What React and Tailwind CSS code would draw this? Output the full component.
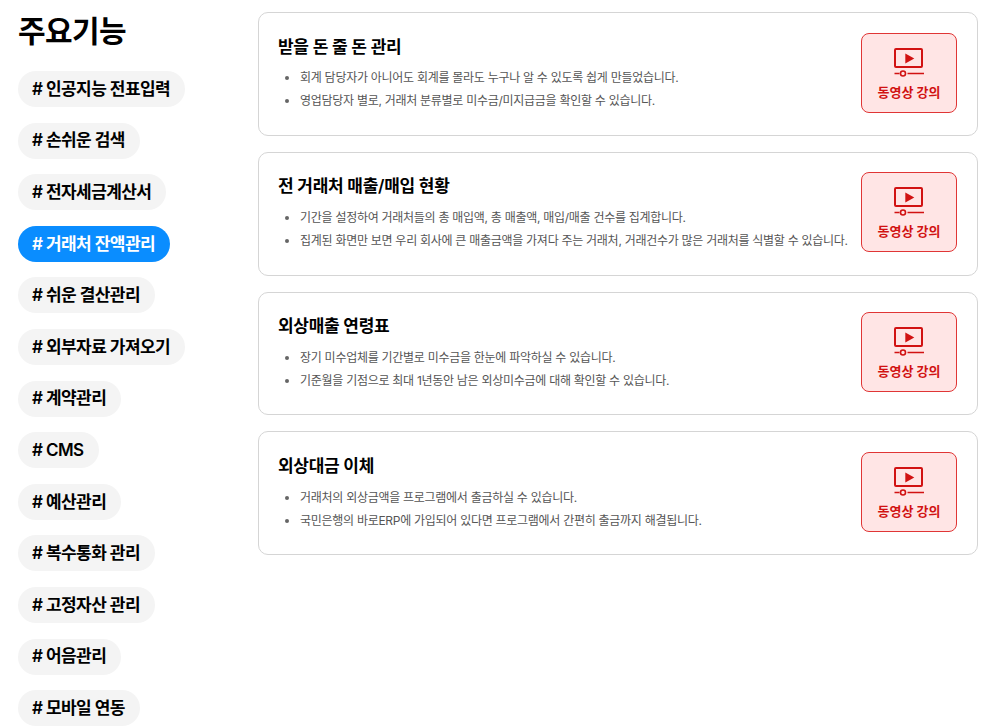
import React from 'react';

const tags = ['인공지능 전표입력', '손쉬운 검색', '전자세금계산서', '거래처 잔액관리', '쉬운 결산관리', '외부자료 가져오기', '계약관리', 'CMS', '예산관리', '복수통화 관리', '고정자산 관리', '어음관리', '모바일 연동'];

const cards = [
  {
    title: '받을 돈 줄 돈 관리',
    lines: ['회계 담당자가 아니어도 회계를 몰라도 누구나 알 수 있도록 쉽게 만들었습니다.', '영업담당자 별로, 거래처 분류별로 미수금/미지급금을 확인할 수 있습니다.'],
  },
  {
    title: '전 거래처 매출/매입 현황',
    lines: ['기간을 설정하여 거래처들의 총 매입액, 총 매출액, 매입/매출 건수를 집계합니다.', '집계된 화면만 보면 우리 회사에 큰 매출금액을 가져다 주는 거래처, 거래건수가 많은 거래처를 식별할 수 있습니다.'],
  },
  {
    title: '외상매출 연령표',
    lines: ['장기 미수업체를 기간별로 미수금을 한눈에 파악하실 수 있습니다.', '기준월을 기점으로 최대 1년동안 남은 외상미수금에 대해 확인할 수 있습니다.'],
  },
  {
    title: '외상대금 이체',
    lines: ['거래처의 외상금액을 프로그램에서 출금하실 수 있습니다.', '국민은행의 바로ERP에 가입되어 있다면 프로그램에서 간편히 출금까지 해결됩니다.'],
  },
];

const VideoIcon = () => (
  <svg width="32" height="31" viewBox="0 0 32 31" fill="none" stroke="#d11212" strokeWidth="2">
    <rect x="2" y="2" width="27" height="18" rx="1" />
    <path d="M12.3 6.5 L21.3 11.5 L12.3 16.5 Z" fill="#d11212" stroke="none" />
    <path d="M1.5 26.5 H6.5 M14.5 26.5 H31" strokeWidth="1.5" />
    <circle cx="10" cy="26.5" r="2.5" strokeWidth="1.6" />
  </svg>
);

const App = () => {
  return (
    <div className="h-[727px] overflow-hidden bg-white flex font-['Inter','Noto_Sans_CJK_KR',sans-serif] text-black">
      {/* Sidebar */}
      <aside className="w-[258px] shrink-0 pl-[18px]">
        <h2 className="text-[30px] leading-[38px] font-bold mt-[12px] mb-[21px] tracking-[-0.6px]">주요기능</h2>
        <div className="flex flex-col items-start gap-[15.6px]">
          {tags.map((tag) => (
            <span
              key={tag}
              className={`h-[36px] pl-[14px] pr-[15px] pt-[1px] rounded-full flex items-center text-[17px] font-semibold tracking-[-0.6px] ${
                tag === '거래처 잔액관리' ? 'bg-[#0a8dff] text-white' : 'bg-[#f4f4f4] text-black'
              }`}
            >
              # {tag}
            </span>
          ))}
        </div>
      </aside>

      {/* Cards */}
      <main className="w-[720px] pt-[12px] flex flex-col gap-[16px]">
        {cards.map((card) => (
          <div key={card.title} className="h-[123.75px] border border-[#d5d5d5] rounded-[10px] pl-[19px] pr-[20px] pt-[19.5px] flex items-start justify-between">
            <div>
              <h3 className="text-[17px] leading-[24px] font-semibold mt-[2px] mb-[7.75px] tracking-[-0.3px]">{card.title}</h3>
              <ul className="list-disc pl-[22px] text-[12px] leading-[23px] tracking-[-0.28px] text-[#555555] marker:text-[#666666]">
                {card.lines.map((line) => (
                  <li key={line}>{line}</li>
                ))}
              </ul>
            </div>
            <button className="w-[96px] h-[80px] shrink-0 rounded-[8px] border border-[#e03535] bg-[#ffe5e5] flex flex-col items-center text-[#d11212] text-[13px] font-bold pt-[13px]">
              <VideoIcon />
              <span className="mt-[5px] leading-[18px]">동영상 강의</span>
            </button>
          </div>
        ))}
      </main>
    </div>
  );
};

export default App;
